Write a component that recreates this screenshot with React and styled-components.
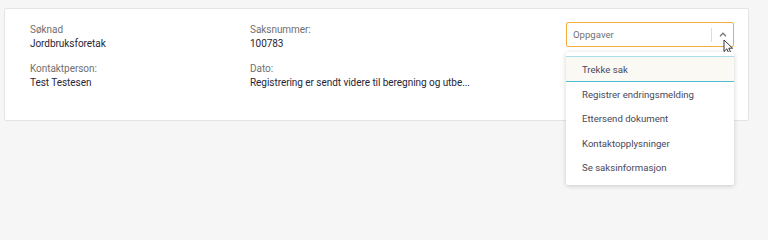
import React from 'react';
import styled, { createGlobalStyle } from 'styled-components';

const GlobalStyle = createGlobalStyle`
  html, body {
    margin: 0;
    padding: 0;
    background: #f6f6f6;
    font-family: Roboto, "Liberation Sans", Arial, sans-serif;
  }
`;

const Page = styled.div`
  width: 768px;
  height: 206px;
  padding: 8px 0 0 4px;
  box-sizing: border-box;
`;

const Card = styled.div`
  position: relative;
  width: 745px;
  height: 113px;
  box-sizing: border-box;
  background: #fff;
  border: 1px solid #e4e4e4;
  border-radius: 2px;
  display: flex;
  padding: 14px 0 0 25px;
`;

const Column = styled.div`
  width: ${(p) => p.$width}px;
  display: flex;
  flex-direction: column;
  gap: 11px;
`;

const Field = styled.div`
  display: flex;
  flex-direction: column;
  font-size: 10px;
  line-height: 14px;
  letter-spacing: -0.05px;
`;

const Label = styled.span`
  color: #707070;
`;

const Value = styled.span`
  color: #26263a;
  white-space: nowrap;
`;

const SelectWrap = styled.div`
  position: relative;
  margin-top: -1px;
  width: 168px;
`;

const Select = styled.div`
  height: 25px;
  box-sizing: border-box;
  border: 1.5px solid #f6ac3c;
  border-radius: 2px;
  display: flex;
  align-items: center;
  padding-left: 6px;
  font-size: 9.6px;
  color: #707070;
`;

const SelectText = styled.span`
  flex: 1;
`;

const Divider = styled.span`
  width: 1px;
  height: 14px;
  background: #dcdcdc;
`;

const Chevron = styled.span`
  width: 21px;
  display: flex;
  justify-content: center;
  align-items: center;
`;

const Cursor = styled.svg`
  position: absolute;
  left: 157px;
  top: 17px;
`;

const Menu = styled.div`
  position: absolute;
  top: 30px;
  left: 0;
  width: 168px;
  height: 133px;
  box-sizing: border-box;
  background: #fff;
  border-radius: 2px;
  box-shadow: 0 1px 5px rgba(0, 0, 0, 0.18);
  padding-top: 4px;
  z-index: 2;
`;

const Item = styled.div`
  height: ${(p) => (p.$active ? 26 : 24.5)}px;
  box-sizing: border-box;
  display: flex;
  align-items: center;
  padding-left: 16px;
  font-size: 9.6px;
  color: #48485a;
  background: ${(p) => (p.$active ? '#fbf9f4' : '#fff')};
  border-top: ${(p) => (p.$active ? '1px solid #a9dbe9' : 'none')};
  border-bottom: ${(p) => (p.$active ? '1.5px solid #52bad3' : 'none')};
`;

const tasks = [
  'Trekke sak',
  'Registrer endringsmelding',
  'Ettersend dokument',
  'Kontaktopplysninger',
  'Se saksinformasjon',
];

export default function App() {
  return (
    <>
      <GlobalStyle />
      <Page>
        <Card>
          <Column $width={220}>
            <Field>
              <Label>Søknad</Label>
              <Value>Jordbruksforetak</Value>
            </Field>
            <Field>
              <Label>Kontaktperson:</Label>
              <Value>Test Testesen</Value>
            </Field>
          </Column>
          <Column $width={316}>
            <Field>
              <Label>Saksnummer:</Label>
              <Value>100783</Value>
            </Field>
            <Field>
              <Label>Dato:</Label>
              <Value>Registrering er sendt videre til beregning og utbe...</Value>
            </Field>
          </Column>
          <SelectWrap>
            <Select>
              <SelectText>Oppgaver</SelectText>
              <Divider />
              <Chevron>
                <svg width="8" height="5" viewBox="0 0 8 5">
                  <path d="M1 4.2 L4 1.2 L7 4.2" fill="none" stroke="#777" strokeWidth="1.3" />
                </svg>
              </Chevron>
            </Select>
            <Cursor width="11" height="16" viewBox="0 0 11 16">
              <path
                d="M1 1 L1 12.5 L3.8 9.8 L6 14.6 L7.9 13.8 L5.8 9.2 L9.6 9.2 Z"
                fill="#fff"
                stroke="#222"
                strokeWidth="0.9"
                strokeLinejoin="round"
              />
            </Cursor>
            <Menu>
              {tasks.map((t, i) => (
                <Item key={t} $active={i === 0}>
                  {t}
                </Item>
              ))}
            </Menu>
          </SelectWrap>
        </Card>
      </Page>
    </>
  );
}
